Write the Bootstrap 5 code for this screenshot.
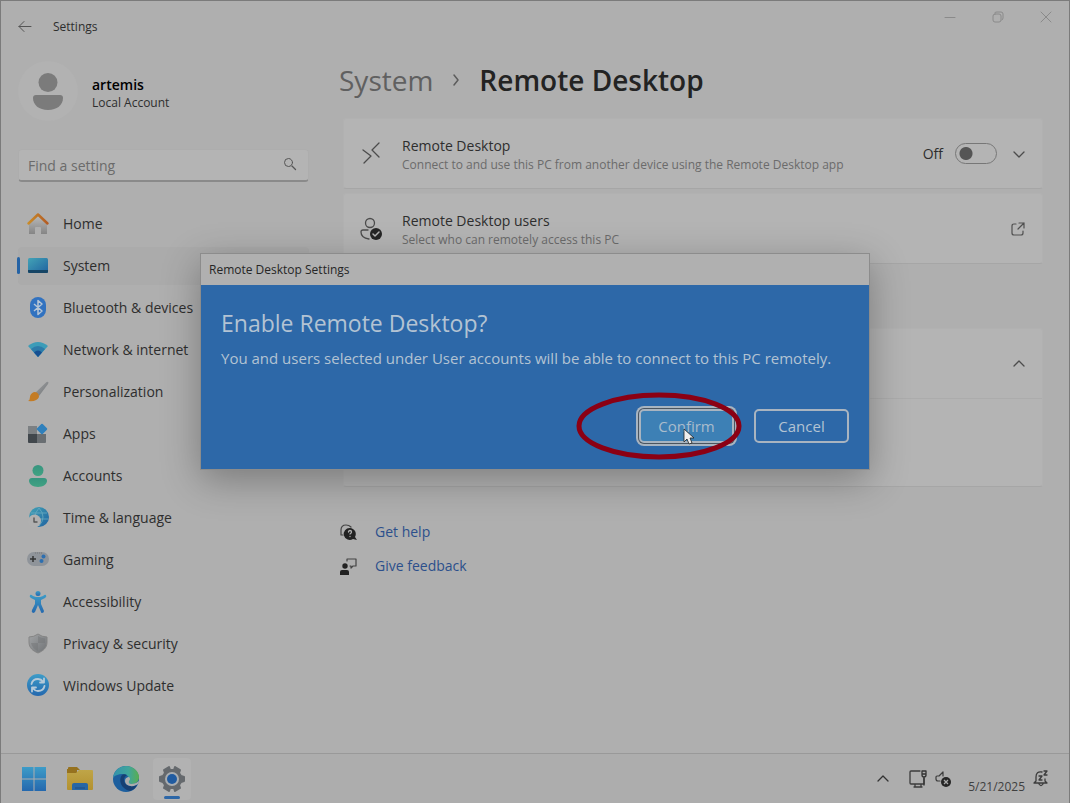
<!DOCTYPE html>
<html lang="en">
<head>
<meta charset="utf-8">
<meta name="viewport" content="width=device-width, initial-scale=1">
<title>Settings - Remote Desktop</title>
<link href="https://cdn.jsdelivr.net/npm/bootstrap@5.3.0/dist/css/bootstrap.min.css" rel="stylesheet">
<style>
  :root { --ink:#2e2e2e; --muted:#6b6b6b; --surface:#b4b4b4; --blue:#2d68a8; --line:#a6a6a6; }
  body { font-family:"Open Sans","Noto Sans",sans-serif; font-size:14px; line-height:20px; color:var(--ink); background:#afafaf; }
  .desktop { border:1px solid #7b7b7b; border-bottom:0; }
  svg { display:block; flex:none; overflow:visible; }
  .ln { fill:none; stroke-linecap:round; stroke-linejoin:round; }
  .ln:not([stroke]) { stroke:currentColor; }
  .plain { border:0; background:none; padding:0; color:inherit; }
  .text-cap { font-size:12px; line-height:18px; }
  .text-soft { color:var(--muted); }
  .titlebar { height:52px; padding:0 15px 0 16px; }
  .win-controls { gap:32px; padding-top:8px; color:#8a8a8a; }
  .side { width:308px; padding-left:17px; }
  .avatar { width:60px; height:60px; background:#b2b2b2; border-radius:50%; }
  .profile { gap:14px; padding-top:8px; margin-bottom:28px; }
  .profile-text { padding-top:6px; }
  .search .form-control { height:33px; padding:0 36px 0 9px; font-size:14px; background:#b4b4b4; border:1px solid #adadad; border-bottom:2px solid #8a8a8a; border-radius:4px; color:var(--ink); }
  .search .form-control::placeholder { color:#6b6b6b; opacity:1; }
  .search label { position:absolute; right:12px; top:8px; color:#555; }
  .side-nav { margin-top:23px; gap:4px; }
  .side-nav .nav-link { height:38px; padding:0 9px; gap:14px; color:var(--ink); border-radius:4px; position:relative; }
  .side-nav .nav-link.active { background:#ababab; }
  .side-nav .nav-link.active::before { content:""; position:absolute; left:-1px; top:10px; width:3px; height:17px; border-radius:2px; background:#2563a5; }
  .content { padding:0 26px 0 34px; }
  .crumbs { height:54px; font-size:28px; line-height:36px; gap:19px; margin:0 0 11px -4px; }
  .crumbs a { color:#606060; font-weight:500; text-decoration:none; }
  .crumbs h1 { font-size:28px; line-height:36px; font-weight:600; margin:0; color:#232323; }
  .tile { min-height:71px; background:var(--surface); border:1px solid #b1b1b1; border-bottom-color:var(--line); border-radius:3px; padding:0 17px 0 16px; }
  .tile + .tile { margin-top:4px; }
  .tile.related { margin-top:64px; padding:0; }
  .tile-icon { width:22px; }
  .tile-text { padding-top:3px; }
  .tile-top { min-height:70px; border-bottom:1px solid #acacac; padding:0 17px; }
  .tile-rest { height:87px; }
  .switch-box { padding:0; margin:0; min-height:0; gap:12px; }
  .switch-box .form-check-input { float:none; margin:0; width:42px; height:21px; border:1px solid #777; border-radius:11px; background:radial-gradient(circle at 10px 50%, #555 6px, transparent 7px) no-repeat; }
  .links { margin-top:28px; }
  .links a { height:34px; gap:18px; color:#2c4f8c; text-decoration:none; margin-left:-3px; }
  .prompt { margin:253px auto 0; max-width:670px; }
  .prompt-box { border:1px solid #8c8c8c; border-radius:0; background:#b0b0b0; box-shadow:0 10px 36px rgba(0,0,0,.3); }
  .prompt-title { padding:0 8px; height:31px; font-size:12px; border:0; color:#262626; }
  .prompt-title h2 { font-size:12px; line-height:18px; margin:0; font-weight:400; }
  .prompt-body { background:var(--blue); color:#b3c3d3; padding:21px 20px 26px; }
  .prompt-body h3 { font-size:23px; line-height:34px; font-weight:400; margin:0 0 8px; }
  .prompt-body p { font-size:15px; line-height:20px; margin:0 0 41px; }
  .prompt-btn { width:95px; height:34px; padding:0; font-size:15px; line-height:20px; color:#b3c3d3; border:2px solid #a9b4c0; border-radius:5px; }
  .prompt-btn.hot { background:#3d80b5; color:#a9bccc; box-shadow:0 0 0 1px #4b5560, 0 0 0 3px #a9b4c0; }
  .ring { position:absolute; left:-63px; top:-17px; pointer-events:none; }
  .pointer { position:absolute; left:44px; top:19px; pointer-events:none; }
  .taskbar { height:50px; border-top:1px solid #999; background:#adadad; padding:0 20px 0 10px; }
  .task-btn { width:46px; height:49px; }
  .task-btn.open { position:relative; background:#b2b2b2; height:42px; width:38px; margin:0 4px; border-radius:4px; }
  .task-btn.open::after { content:""; position:absolute; bottom:1px; left:11px; width:16px; height:3px; border-radius:2px; background:#2d67a7; }
  .clock { font-size:12px; line-height:16px; padding-top:16px; color:#404040; }
</style>
</head>
<body>
<svg width="0" height="0" class="position-absolute" aria-hidden="true">
  <defs>
    <linearGradient id="roof" x1="0" x2="1"><stop offset="0" stop-color="#c98b28"/><stop offset="1" stop-color="#b35c25"/></linearGradient>
    <linearGradient id="grey" x1="0" y1="0" x2="1" y2="1"><stop offset="0" stop-color="#a2a4a6"/><stop offset="1" stop-color="#6f7275"/></linearGradient>
    <linearGradient id="wall" x1="0" x2="0" y1="0" y2="1"><stop offset="0" stop-color="#b9b9b9"/><stop offset="1" stop-color="#858585"/></linearGradient>
    <linearGradient id="sky" x1="0" y1="0" x2="1" y2="1"><stop offset="0" stop-color="#43a3b6"/><stop offset="1" stop-color="#1f62a0"/></linearGradient>
    <linearGradient id="cyan" x1="0" y1="0" x2="0" y2="1"><stop offset="0" stop-color="#3d9cc8"/><stop offset="1" stop-color="#2468ae"/></linearGradient>
    <linearGradient id="teal" x1="0" y1="0" x2="0" y2="1"><stop offset="0" stop-color="#37957f"/><stop offset="1" stop-color="#41a283"/></linearGradient>
    <linearGradient id="edge" x1="0" y1="0" x2="1" y2="0"><stop offset="0" stop-color="#3392ad"/><stop offset=".6" stop-color="#40a59b"/><stop offset="1" stop-color="#5aae4f"/></linearGradient>
    <linearGradient id="fold" x1="0" y1="0" x2="0" y2="1"><stop offset="0" stop-color="#bfa548"/><stop offset="1" stop-color="#b3912f"/></linearGradient>
  </defs>
</svg>

<div class="desktop d-flex flex-column min-vh-100">
  <header class="titlebar d-flex align-items-center">
    <button class="plain" aria-label="Back"><svg width="16" height="16" viewBox="0 0 16 16"><path class="ln" stroke="#555" d="M14 7.500H2M7 2.500l-5 5 5 5"/></svg></button>
    <span class="text-cap ms-3 ps-1">Settings</span>
    <div class="win-controls d-flex ms-auto align-self-start">
      <button class="plain" aria-label="Minimize"><svg width="16" height="16" viewBox="0 0 16 16"><path class="ln" d="M3 8.500h10"/></svg></button>
      <button class="plain" aria-label="Restore"><svg width="16" height="16" viewBox="0 0 16 16"><rect class="ln" x="3" y="5" width="8" height="8" rx="2"/><path class="ln" d="M5 3.500Q6 3 7 3h4q2 0 2 2v4q0 1-1 2"/></svg></button>
      <button class="plain" aria-label="Close"><svg width="16" height="16" viewBox="0 0 16 16"><path class="ln" d="m3 3 10 10M13 3 3 13"/></svg></button>
    </div>
  </header>

  <div class="d-flex flex-grow-1">
    <aside class="side flex-shrink-0">
      <div class="profile d-flex align-items-center">
        <div class="avatar d-flex align-items-center justify-content-center"><svg width="30" height="37" viewBox="0 0 30 37" fill="#7b7b7b"><circle cx="15" cy="9.500" r="9.500"/><path d="M3 22h24q3 0 3 3c0 7-6 12-15 12S0 32 0 25q0-3 3-3z"/></svg></div>
        <div class="profile-text"><div class="fw-semibold lh-sm text-black">artemis</div><div class="text-cap">Local Account</div></div>
      </div>
      <form class="search position-relative" role="search">
        <input id="find" class="form-control" type="text" placeholder="Find a setting">
        <label for="find" aria-label="Find a setting"><svg width="14" height="14" viewBox="0 0 14 14"><circle class="ln" cx="5.500" cy="5.500" r="4"/><path class="ln" stroke-width="1.300" d="m9 9 3.500 3.500"/></svg></label>
      </form>
      <nav class="side-nav nav flex-column">
        <a class="nav-link d-flex align-items-center" href="#"><svg width="22" height="22" viewBox="0 0 22 22"><path fill="url(#wall)" d="M2 10 11 3l9 7v11h-6v-6q0-1-1-1H9q-1 0-1 1v6H2z"/><path fill="none" stroke="url(#roof)" stroke-width="2.500" stroke-linecap="round" stroke-linejoin="round" d="M1.500 10.500 11 1.500l9.500 9"/></svg>Home</a>
        <a class="nav-link active d-flex align-items-center" href="#" aria-current="page"><svg width="22" height="22" viewBox="0 0 22 22"><rect x="1" y="3" width="20" height="15" rx="1.500" fill="url(#sky)"/><path fill="#164565" d="M1 15h20v1.500q0 1.500-1.500 1.500h-17Q1 18 1 16.500z"/></svg>System</a>
        <a class="nav-link d-flex align-items-center" href="#"><svg width="22" height="22" viewBox="0 0 22 22"><rect x="3" y="0" width="16" height="21" rx="8" fill="#3172c0"/><path fill="none" stroke="#b6c5d5" stroke-width="1.500" stroke-linejoin="round" d="m7 7 8 7-4 3.500v-14L15 7l-8 7"/></svg>Bluetooth &amp; devices</a>
        <a class="nav-link d-flex align-items-center" href="#"><svg width="22" height="22" viewBox="0 0 22 22"><path fill="#3c9cb8" d="M1 7q10-8 20 0L11 18z"/><path fill="#2d7ba9" d="M4 10q7-6 14 0l-7 8z"/><path fill="#164f92" d="M7 13.500q4-4 8 0L11 18z"/></svg>Network &amp; internet</a>
        <a class="nav-link d-flex align-items-center" href="#"><svg width="22" height="22" viewBox="0 0 22 22"><path fill="url(#grey)" d="M21 1q1 0 0 2L12 15l-4-3L19 1.500q1-1 2-.5z"/><path fill="#c47c25" d="M7 11q5 0 5 5-2 5-11 4 2-1 2-4t4-5z"/></svg>Personalization</a>
        <a class="nav-link d-flex align-items-center" href="#"><svg width="22" height="22" viewBox="0 0 22 22"><path fill="#7c8083" d="M1 3h9v9H1z"/><path fill="#41474c" d="M1 11h9v9H2q-1 0-1-1z"/><path fill="#696e72" d="M10 11h9v8q0 1-1 1h-8z"/><rect x="11" y="2" width="8" height="8" rx="1" transform="rotate(45 15 6)" fill="#2f80bc"/></svg>Apps</a>
        <a class="nav-link d-flex align-items-center" href="#"><svg width="22" height="22" viewBox="0 0 22 22" fill="url(#teal)"><circle cx="11" cy="5.500" r="5.500"/><path d="M5 13h12q3 0 3 3c0 3-4 6-9 6s-9-3-9-6q0-3 3-3z"/></svg>Accounts</a>
        <a class="nav-link d-flex align-items-center" href="#"><svg width="22" height="22" viewBox="0 0 22 22"><circle cx="12" cy="10" r="10" fill="url(#sky)"/><path fill="none" stroke="#69abc0" stroke-width=".8" d="M4 6h16M3 12h18M12 1q-8 9 0 18M12 1q8 9 0 18"/><circle cx="7.500" cy="14" r="6.500" fill="#b0b0b0"/><path class="ln" stroke="#555" stroke-width="1.400" d="M7 11v4h3"/></svg>Time &amp; language</a>
        <a class="nav-link d-flex align-items-center" href="#"><svg width="22" height="22" viewBox="0 0 22 22"><rect x="0" y="3" width="22" height="14" rx="7" fill="#8f949a"/><path stroke="#343434" stroke-width="1.500" d="M3 10h6M6 7v6"/><path stroke="#777" d="M8 4h7" stroke-dasharray="1 1"/><circle cx="16.500" cy="7.500" r="2" fill="#2d6fb0"/><circle cx="14.500" cy="12" r="2" fill="#2d6fb0"/></svg>Gaming</a>
        <a class="nav-link d-flex align-items-center" href="#"><svg width="22" height="22" viewBox="0 0 22 22" fill="url(#cyan)"><circle cx="11" cy="2.500" r="2.500"/><path d="M3 4q1-1 3 1l3 1h4l3-1q2-2 3-1 1 2-1 3l-4 2v4l3 7q0 2-2 2-1 0-1-1l-3-7-3 7q-1 1-2 1-2-1-1-3l3-6V9L4 7Q2 6 3 4z"/></svg>Accessibility</a>
        <a class="nav-link d-flex align-items-center" href="#"><svg width="22" height="22" viewBox="0 0 22 22"><path fill="url(#grey)" stroke="#858585" d="M11 1q4 3 9 3v5c0 6-4 9-9 11-5-2-9-5-9-11V4q5 0 9-3z"/><path fill="#747678" d="M11 3q3 2 7 2.500V10h-7zM4 10h7v8q-6-3-7-8z" opacity=".5"/></svg>Privacy &amp; security</a>
        <a class="nav-link d-flex align-items-center" href="#"><svg width="22" height="22" viewBox="0 0 22 22"><circle cx="11" cy="10" r="11" fill="url(#cyan)"/><path class="ln" stroke="#b5c9d8" stroke-width="1.800" d="M4.500 9q1-5 6.500-5 3 0 5.500 3M17 3.500V7.500h-4M17.500 11q-1 5-6.500 5-3 0-5.500-3M5 16.500v-4h4"/></svg>Windows Update</a>
      </nav>
    </aside>

    <main class="content flex-grow-1">
      <div class="crumbs d-flex align-items-center">
        <a href="#">System</a>
        <svg width="8" height="12" viewBox="0 0 8 12"><path class="ln" stroke="#5c5c5c" stroke-width="1.500" d="m2 1 4 5-4 5"/></svg>
        <h1>Remote Desktop</h1>
      </div>

      <section class="tile d-flex align-items-center">
        <svg class="tile-icon" height="22" viewBox="0 0 22 22"><path class="ln" stroke="#4c4c4c" stroke-width="1.300" d="m3 7 8 6-7 7M19 0l-7 7 7 7"/></svg>
        <div class="tile-text ms-3 ps-1"><div>Remote Desktop</div><div class="text-cap text-soft">Connect to and use this PC from another device using the Remote Desktop app</div></div>
        <div class="switch-box form-check form-switch d-flex align-items-center ms-auto">
          <label for="rd">Off</label><input class="form-check-input" type="checkbox" role="switch" id="rd">
        </div>
        <button class="plain ms-3" aria-label="Expand"><svg width="12" height="12" viewBox="0 0 12 12"><path class="ln" stroke="#4c4c4c" stroke-width="1.300" d="m1 4 5 5 5-5"/></svg></button>
      </section>

      <section class="tile d-flex align-items-center">
        <svg class="tile-icon" height="22" viewBox="0 0 22 22"><circle class="ln" stroke="#4c4c4c" stroke-width="1.300" cx="10" cy="5" r="4.500"/><path class="ln" stroke="#4c4c4c" stroke-width="1.300" d="M8 12H3q-2 0-2 2 0 6 8 7"/><circle cx="16" cy="16" r="6" fill="#252525"/><path class="ln" stroke="#b4b4b4" stroke-width="1.500" d="m13 16 2 2 4-4"/></svg>
        <div class="tile-text ms-3 ps-1"><div>Remote Desktop users</div><div class="text-cap text-soft">Select who can remotely access this PC</div></div>
        <a class="ms-auto text-reset" href="#" aria-label="Open Remote Desktop users"><svg width="14" height="14" viewBox="0 0 14 14"><path class="ln" stroke="#505050" stroke-width="1.200" d="M5 2H3Q1 2 1 4v7q0 2 2 2h7q2 0 2-2V9M8 1h5v5M13 1 7 7"/></svg></a>
      </section>

      <section class="tile related">
        <div class="tile-top d-flex align-items-center justify-content-end"><button class="plain" aria-label="Collapse"><svg width="12" height="12" viewBox="0 0 12 12"><path class="ln" stroke="#4c4c4c" stroke-width="1.300" d="m1 8 5-5 5 5"/></svg></button></div>
        <div class="tile-rest"></div>
      </section>

      <div class="links d-flex flex-column align-items-start">
        <a class="d-flex align-items-center" href="#"><svg width="17" height="17" viewBox="0 0 17 17"><path class="ln" stroke="#444" stroke-width="1.200" d="M3 11H1V6q0-5 5-5 3 0 5 2"/><path fill="#222" d="M10 4a6 6 0 0 1 5 9l2 3-4-1a6 6 0 1 1-3-11z"/><path class="ln" stroke="#b0b0b0" stroke-width="1.300" d="M8.500 8q0-1.500 1.500-1.500T11.500 8q0 1-1.500 2M10 12.500v.1"/></svg>Get help</a>
        <a class="d-flex align-items-center" href="#"><svg width="17" height="17" viewBox="0 0 17 17"><circle cx="5" cy="8" r="2.700" fill="#222"/><path fill="#222" d="M0 17v-3q0-2 2-2h5q2 0 2 2v3z"/><path class="ln" stroke="#444" stroke-width="1.200" d="M7 3V1h9v7h-3l-2 2V8h-1"/></svg>Give feedback</a>
      </div>
    </main>
  </div>

  <footer class="taskbar d-flex align-items-center">
    <button class="plain task-btn d-flex align-items-center justify-content-center" aria-label="Start"><svg width="24" height="24" viewBox="0 0 24 24" fill="url(#cyan)"><path d="M0 0h11.500v11.500H0zM12.500 0H24v11.500H12.500zM0 12.500h11.500V24H0zM12.500 12.500H24V24H12.500z"/></svg></button>
    <button class="plain task-btn d-flex align-items-center justify-content-center" aria-label="File Explorer"><svg width="26" height="24" viewBox="0 0 26 24"><path fill="#96721f" d="M1 1q0-1 1-1h8l3 3H1z"/><path fill="#96721f" d="M0 2h10v4H0z"/><path fill="url(#fold)" d="M0 6h9l3-3h13q1 0 1 1v18q0 1-1 1H1q-1 0-1-1z"/><path fill="#2867a5" d="M5 23v-5q0-2 2-2h12q2 0 2 2v5z"/><path stroke="#1e4d80" d="M8 21h10"/></svg></button>
    <button class="plain task-btn d-flex align-items-center justify-content-center" aria-label="Edge"><svg width="26" height="26" viewBox="0 0 26 26"><circle cx="13" cy="13" r="13" fill="#1d5f9e"/><path fill="url(#edge)" d="M0 12C1 4 7 0 13 0c8 0 13 6 13 11 0 5-4 7-7 7-3 0-4-1-3-3 1-4-2-7-6-7-5 0-9 2-10 4z"/><path fill="#163f73" d="M9 9c-4 5-1 14 8 16 3-1 6-3 7-6-6 3-13 0-13-5 0-2 1-4 3-5-2-1-4-1-5 0z"/><path fill="#adadad" d="M16 11q2 2 0 4-1 3 3 3 4 0 7-3 0 3-3 4c-5 3-11 0-11-4 0-3 2-4 4-4z"/></svg></button>
    <button class="plain task-btn open d-flex align-items-center justify-content-center" aria-label="Settings"><svg width="26" height="26" viewBox="0 0 26 26"><path fill="#65696d" stroke="#65696d" stroke-width="2" stroke-linejoin="round" d="m10 1 1 3h4l1-3 5 3-1 3 2 3 3 1v4l-3 1-2 3 1 3-5 3-1-3h-4l-1 3-5-3 1-3-2-3-3-1v-4l3-1 2-3-1-3z"/><circle cx="13" cy="13" r="7" fill="#a9adb1"/><circle cx="13" cy="13" r="5" fill="#205ba0"/></svg></button>
    <div class="d-flex align-items-center ms-auto">
      <button class="plain me-3" aria-label="Hidden icons"><svg width="12" height="12" viewBox="0 0 12 12"><path class="ln" stroke="#333" stroke-width="1.300" d="m1 8 5-5 5 5"/></svg></button>
      <button class="plain ms-1" aria-label="Network"><svg width="18" height="18" viewBox="0 0 18 18"><path class="ln" stroke="#3c3c3c" stroke-width="1.300" d="M11 1H2Q1 1 1 2v11q0 1 1 1h13V8M5 17h8M6 14v3M12 14v3"/><path class="ln" stroke="#333" stroke-width="1.300" d="M13 1h4v4q0 2-2 2t-2-2zM13 4h4M15 7v8"/></svg></button>
      <button class="plain ms-2" aria-label="Volume muted"><svg width="17" height="17" viewBox="0 0 17 17"><path class="ln" stroke="#3c3c3c" stroke-width="1.200" d="M5 11H3q-2 0-2-2V7q0-1 1-1h2l4-4v4"/><circle cx="11" cy="12" r="5" fill="#252525"/><path stroke="#aaa" stroke-width="1.300" d="m9 10 4 4M13 10l-4 4"/></svg></button>
      <time class="clock ms-3" datetime="2025-05-21">5/21/2025</time>
      <button class="plain ms-2" aria-label="Notifications"><svg width="16" height="17" viewBox="0 0 16 17"><path class="ln" stroke="#3c3c3c" stroke-width="1.300" d="M9 2Q3 1 3 7v4l-2 2h13l-2-2V9M6 14q2 3 4 0M11 1h3l-3 4h3M6 6h3l-3 4h3"/></svg></button>
    </div>
  </footer>
</div>

<div class="modal d-block position-absolute overflow-hidden" tabindex="-1" role="dialog" aria-labelledby="prompt-name">
  <div class="modal-dialog prompt">
    <div class="modal-content prompt-box">
      <div class="modal-header prompt-title"><h2 id="prompt-name">Remote Desktop Settings</h2></div>
      <div class="prompt-body">
        <h3>Enable Remote Desktop?</h3>
        <p>You and users selected under User accounts will be able to connect to this PC remotely.</p>
        <div class="d-flex justify-content-end gap-3">
          <div class="position-relative me-1">
            <button class="btn prompt-btn hot" type="button">Confirm</button>
            <svg class="ring" width="166" height="68" viewBox="0 0 166 68"><ellipse cx="83" cy="34" rx="80" ry="31" fill="none" stroke="#8b0014" stroke-width="5"/></svg>
            <svg class="pointer" width="12" height="18" viewBox="0 0 12 18"><path fill="#eee" stroke="#222" stroke-width=".8" d="M1 1v13l3-3 2 5 3-1-2-5h4z"/></svg>
          </div>
          <button class="btn prompt-btn" type="button">Cancel</button>
        </div>
      </div>
    </div>
  </div>
</div>
<script src="https://cdn.jsdelivr.net/npm/bootstrap@5.3.0/dist/js/bootstrap.bundle.min.js"></script>
</body>
</html>
